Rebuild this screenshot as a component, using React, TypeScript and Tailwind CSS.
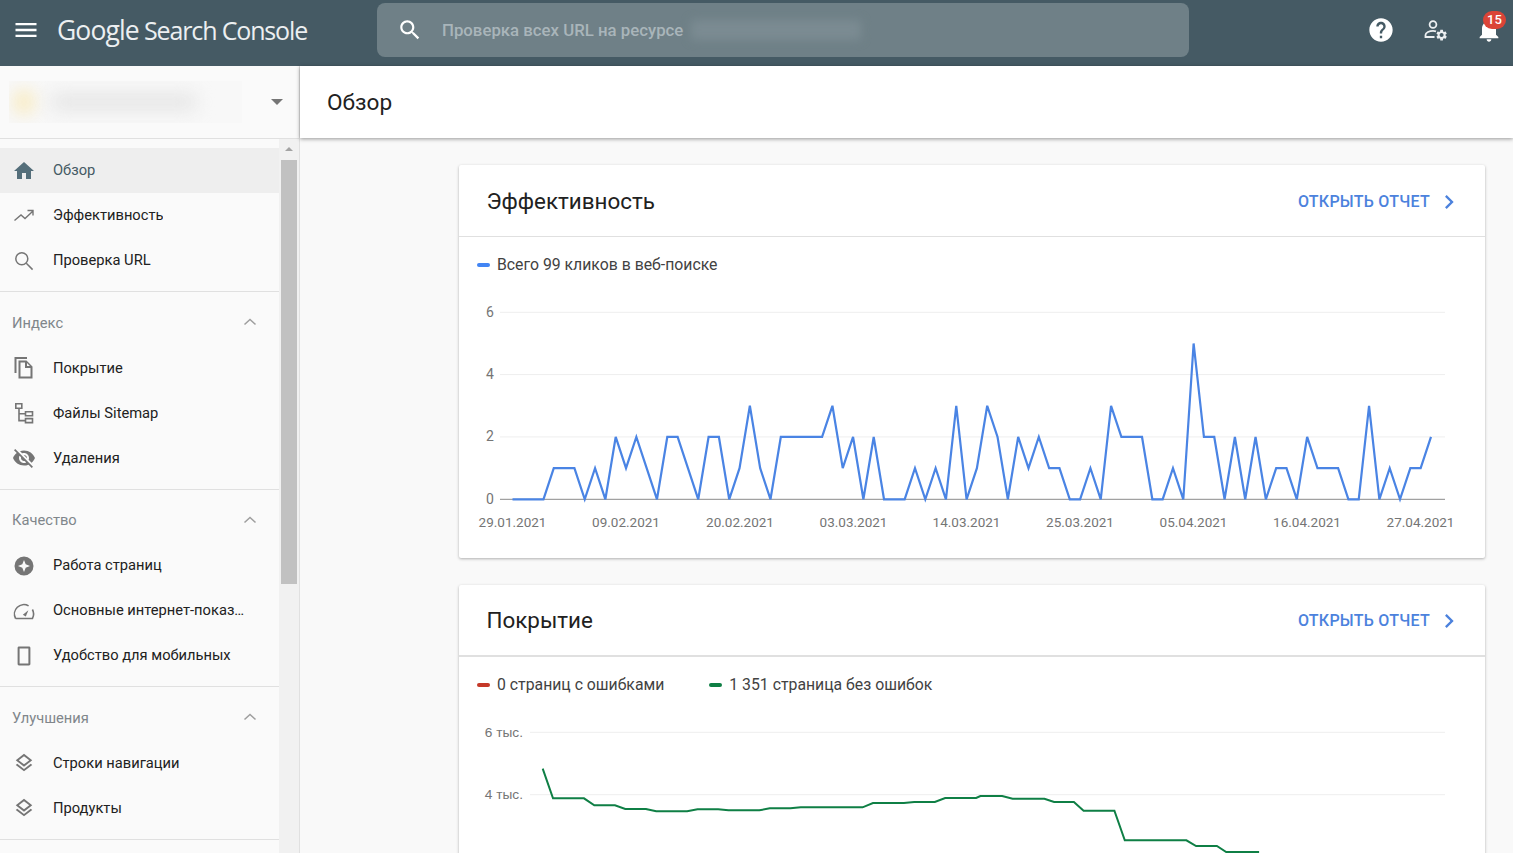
import type { ReactNode } from "react";

const clicks = [
  0, 0, 0, 0, 1, 1, 1, 0, 1, 0, 2, 1, 2, 1, 0, 2, 2, 1, 0, 2, 2, 0, 1, 3, 1, 0, 2, 2, 2, 2, 2, 3, 1, 2, 0, 2, 0, 0, 0, 1, 0, 1, 0, 3, 0, 1,
  3, 2, 0, 2, 1, 2, 1, 1, 0, 0, 1, 0, 3, 2, 2, 2, 0, 0, 1, 0, 5, 2, 2, 0, 2, 0, 2, 0, 1, 1, 0, 2, 1, 1, 1, 0, 0, 3, 0, 1, 0, 1, 1, 2,
];

const clickPoints = clicks.map((v, i) => `${512.5 + i * 10.32},${499.3 - v * 31.17}`).join(" ");

const coverageTop = [
  768.7, 798.3, 798.3, 798.3, 798.3, 805.3, 805.3, 805.3, 809, 809, 809, 811.3, 811.3, 811.3, 811.3, 809.3, 809.3, 809.3, 810.3, 810.3, 810.3,
  810.3, 808.3, 808.3, 808.3, 807.3, 807.3, 807.3, 807.3, 807.3, 807.3, 807.3, 803, 803, 803, 803, 802, 802, 802, 798, 798, 798, 798,
];

const coveragePoints =
  coverageTop.map((y, i) => `${542.7 + i * 10.32},${y}`).join(" ") +
  " 980.4,796 1002.2,796 1012.6,798.7 1044.4,798.7 1054.1,802 1073.9,802 1083.6,810.7 1114.4,810.7 1124.8,840.3 1186.4,840.3 1196.1,846 1216.9,846 1226.2,852 1259.1,852";

const dates = [
  ["29.01.2021", 512.5],
  ["09.02.2021", 626],
  ["20.02.2021", 740],
  ["03.03.2021", 853.5],
  ["14.03.2021", 966.5],
  ["25.03.2021", 1080],
  ["05.04.2021", 1193.5],
  ["16.04.2021", 1307],
  ["27.04.2021", 1420.5],
] as const;

function Icon({ children, className }: { children: ReactNode; className?: string }) {
  return (
    <svg viewBox="0 0 24 24" className={className ?? "h-6 w-6 shrink-0 fill-[#757575]"}>
      {children}
    </svg>
  );
}

const layers = (
  <Icon className="h-[22px] w-6 shrink-0 fill-[#757575]">
    <path d="M11.99 18.54l-7.37-5.73L3 14.07l9 7 9-7-1.63-1.27-7.38 5.74zM12 16l7.36-5.73L21 9l-9-7-9 7 1.63 1.27L12 16zm0-11.47L17.74 9 12 13.47 6.26 9 12 4.53z" />
  </Icon>
);

const groups = [
  {
    title: "Индекс",
    items: [
      {
        label: "Покрытие",
        icon: (
          <Icon>
            <path d="M15 1H2.5v16h2V3H15V1zm-.5 3.5l6 6v12h-14v-18h8zm-6 2v14h10V12H13V6.500H8.500zm6.500.6V10h2.900L15 7.100z" />
          </Icon>
        ),
      },
      {
        label: "Файлы Sitemap",
        icon: (
          <Icon className="h-6 w-6 shrink-0 fill-none stroke-[#757575] stroke-[1.6]">
            <path d="M3.8 2.8h6v4.4h-6zM13.5 10.8h7v4h-7zM13.5 17.6h7v4h-7zM7 7.2v12.4h6.5M7 12.8h6.5" />
          </Icon>
        ),
      },
      {
        label: "Удаления",
        icon: (
          <Icon>
            <path d="M12 7c2.76 0 5 2.24 5 5 0 .65-.13 1.26-.36 1.83l2.92 2.92c1.51-1.26 2.7-2.89 3.43-4.75-1.73-4.39-6-7.5-11-7.5-1.4 0-2.74.25-3.98.7l2.16 2.16C10.74 7.13 11.35 7 12 7zM2 4.27l2.28 2.28.46.46C3.08 8.3 1.78 10.02 1 12c1.73 4.39 6 7.5 11 7.5 1.55 0 3.03-.3 4.38-.84l.42.42L19.73 22 21 20.73 3.27 3 2 4.27zM7.53 9.8l1.55 1.55c-.05.21-.08.43-.08.65 0 1.66 1.34 3 3 3 .22 0 .44-.03.65-.08l1.55 1.55c-.67.33-1.41.53-2.2.53-2.76 0-5-2.24-5-5 0-.79.2-1.53.53-2.2zm4.31-.78l3.15 3.15.02-.16c0-1.66-1.34-3-3-3l-.17.01z" />
          </Icon>
        ),
      },
    ],
  },
  {
    title: "Качество",
    items: [
      {
        label: "Работа страниц",
        icon: (
          <Icon>
            <path
              fillRule="evenodd"
              d="M12 2.5a9.5 9.5 0 1 0 0 19 9.5 9.5 0 0 0 0-19zm0 3.5l1.7 4.3L18 12l-4.3 1.7L12 18l-1.7-4.3L6 12l4.3-1.7L12 6z"
            />
          </Icon>
        ),
      },
      {
        label: "Основные интернет-показатели",
        icon: (
          <Icon className="h-6 w-6 shrink-0 fill-none stroke-[#757575] stroke-[1.6]">
            <path d="M3.6 19.5a9.4 9.4 0 0 1 13-12.6M20.4 10.5a9.4 9.4 0 0 1 0 9H3.6" />
            <path d="M10.8 15.8l5.6-4.6-2.6 6.4z" className="fill-[#757575] stroke-none" />
          </Icon>
        ),
      },
      {
        label: "Удобство для мобильных",
        icon: (
          <Icon>
            <path d="M17 2.5H7c-.8 0-1.4.6-1.4 1.4v16.2c0 .8.6 1.4 1.4 1.4h10c.8 0 1.4-.6 1.4-1.4V3.9c0-.8-.6-1.4-1.4-1.4zm-.6 17H7.600v-15h8.800v15z" />
          </Icon>
        ),
      },
    ],
  },
  {
    title: "Улучшения",
    items: [
      { label: "Строки навигации", icon: layers },
      { label: "Продукты", icon: layers },
    ],
  },
];

function NavRow({ icon, label, active }: { icon: ReactNode; label: string; active?: boolean }) {
  return (
    <div className={`flex h-[45px] items-center gap-[17px] pr-8 pl-3 text-[14.7px] ${active ? "bg-[#eeeeee] text-[#455a64]" : "text-[#212121]"}`}>
      {icon}
      <span className="truncate">{label}</span>
    </div>
  );
}

function ReportLink({ className }: { className: string }) {
  return (
    <div className={`flex items-center gap-[5px] text-[16px] font-medium tracking-[0.25px] text-[#4c82dd] ${className}`}>
      ОТКРЫТЬ ОТЧЕТ
      <Icon className="-mr-[2px] h-7 w-7 fill-[#4c82dd]">
        <path d="M10 6L8.59 7.41 13.17 12l-4.58 4.59L10 18l6-6z" />
      </Icon>
    </div>
  );
}

function Legend({ color, label }: { color: string; label: string }) {
  return (
    <div className="flex items-center gap-[7px] text-[15.8px] text-[#424242]">
      <span className={`h-1 w-[13px] rounded-full ${color}`} />
      {label}
    </div>
  );
}

export default function App() {
  return (
    <div className="flex h-screen flex-col overflow-hidden bg-[#f9f9f9] font-['Roboto',sans-serif]">
      {/* Top bar */}
      <header className="flex h-[66px] shrink-0 items-start bg-[#455a64] text-white">
        <div className="mt-[16px] ml-[12px] w-[28px]">
          <Icon className="h-[28px] w-[28px] fill-white">
            <path d="M3 18h18v-2H3v2zm0-5h18v-2H3v2zm0-7v2h18V6H3z" />
          </Icon>
        </div>
        <div className="mt-[13px] ml-[17px] w-[320px] font-['Open_Sans',sans-serif] text-[25px] leading-[34px] tracking-[-1.15px] whitespace-nowrap text-[#eceff1]">
          <span className="text-[26.5px] tracking-[-0.9px]">Google</span> Search Console
        </div>
        <div className="relative mt-[3px] flex h-[54px] w-[812px] items-center overflow-hidden rounded-lg bg-[#6f8087] pl-5">
          <Icon className="h-[26px] w-[26px] fill-white">
            <path d="M15.5 14h-.79l-.28-.27C15.41 12.59 16 11.11 16 9.5 16 5.91 13.09 3 9.5 3S3 5.91 3 9.5 5.91 16 9.5 16c1.61 0 3.09-.59 4.23-1.57l.27.28v.79l5 4.99L20.49 19l-4.99-5zm-6 0C7.01 14 5 11.99 5 9.5S7.01 5 9.5 5 14 7.01 14 9.5 11.99 14 9.5 14z" />
          </Icon>
          <span className="ml-[19px] pt-px text-[16.8px] font-medium text-[#a9b5ba]">Проверка всех URL на ресурсе</span>
          <span className="ml-2 h-5 w-[170px] rounded bg-[#7b8b92] blur-[5px]" />
        </div>
        <div className="mt-[16px] ml-auto flex items-center gap-[27px] pr-[10px]">
          <Icon className="h-[28px] w-[28px] fill-white">
            <path d="M12 2C6.48 2 2 6.48 2 12s4.48 10 10 10 10-4.48 10-10S17.52 2 12 2zm1 17h-2v-2h2v2zm2.07-7.75l-.9.92C13.45 12.9 13 13.5 13 15h-2v-.5c0-1.1.45-2.1 1.17-2.83l1.24-1.26c.37-.36.59-.86.59-1.41 0-1.1-.9-2-2-2s-2 .9-2 2H8c0-2.21 1.79-4 4-4s4 1.79 4 4c0 .88-.36 1.68-.93 2.25z" />
          </Icon>
          <svg viewBox="0 0 26 26" className="h-[26px] w-[26px]">
            <circle cx="11" cy="7.5" r="3.4" fill="none" stroke="#eceff1" strokeWidth="1.8" />
            <path d="M14 14.3c-1-.3-2-.4-3-.4-3.5 0-7.5 1.7-7.5 4V20h9" fill="none" stroke="#eceff1" strokeWidth="1.8" />
            <g transform="translate(13 11.5) scale(0.55)" fill="#eceff1">
              <path d="M19.14 12.94c.04-.3.06-.61.06-.94 0-.32-.02-.64-.07-.94l2.03-1.58c.18-.14.23-.41.12-.61l-1.92-3.32c-.12-.22-.37-.29-.59-.22l-2.39.96c-.5-.38-1.03-.7-1.62-.94l-.36-2.54c-.04-.24-.24-.41-.48-.41h-3.84c-.24 0-.43.17-.47.41l-.36 2.54c-.59.24-1.13.57-1.62.94l-2.39-.96c-.22-.08-.47 0-.59.22L2.74 8.87c-.12.21-.08.47.12.61l2.03 1.58c-.05.3-.09.63-.09.94s.02.64.07.94l-2.03 1.58c-.18.14-.23.41-.12.61l1.92 3.32c.12.22.37.29.59.22l2.39-.96c.5.38 1.03.7 1.62.94l.36 2.54c.05.24.24.41.48.41h3.84c.24 0 .44-.17.47-.41l.36-2.54c.59-.24 1.13-.56 1.62-.94l2.39.96c.22.08.47 0 .59-.22l1.92-3.32c.12-.22.07-.47-.12-.61l-2.01-1.58zM12 15.6c-1.98 0-3.6-1.62-3.6-3.6s1.62-3.6 3.6-3.6 3.6 1.62 3.6 3.6-1.62 3.6-3.6 3.6z" />
            </g>
          </svg>
          <div className="relative">
            <Icon className="h-[28px] w-[28px] fill-white">
              <path d="M12 22c1.1 0 2-.9 2-2h-4c0 1.1.89 2 2 2zm6-6v-5c0-3.07-1.64-5.64-4.5-6.32V4c0-.83-.67-1.5-1.5-1.5s-1.5.67-1.5 1.5v.68C7.63 5.36 6 7.92 6 11v5l-2 2v1h16v-1l-2-2z" />
            </Icon>
            <span className="absolute -top-[5px] -right-[3px] flex h-[18px] w-[23px] items-center justify-center rounded-full bg-[#db4437] text-[13px] font-medium text-white">
              15
            </span>
          </div>
        </div>
      </header>

      <div className="flex min-h-0 flex-1">
        {/* Sidebar */}
        <aside className="flex w-[300px] shrink-0 flex-col border-r border-[#e0e0e0] bg-[#fafafa]">
          <div className="flex h-[73px] shrink-0 items-center border-b border-[#e0e0e0] pl-[9px]">
            <div className="relative flex h-[42px] w-[233px] items-center overflow-hidden bg-[#f8f8f8]">
              <span className="ml-[4px] h-[26px] w-[22px] rounded-full bg-[#f8ecc6] blur-[8px]" />
              <span className="ml-4 h-[16px] w-[145px] rounded bg-[#e4e4e4] blur-[9px]" />
            </div>
            <span className="ml-[29px] h-0 w-0 border-x-[6px] border-t-[6px] border-x-transparent border-t-[#757575]" />
          </div>
          <div className="flex min-h-0 flex-1">
            <nav className="w-[279px] shrink-0">
              <div className="border-b border-[#e0e0e0] pt-[9px] pb-2">
                <NavRow
                  active
                  label="Обзор"
                  icon={
                    <Icon className="h-6 w-6 shrink-0 fill-[#546e7a]">
                      <path d="M10 20v-6h4v6h5v-8h3L12 3 2 12h3v8z" />
                    </Icon>
                  }
                />
                <NavRow
                  label="Эффективность"
                  icon={
                    <Icon className="h-6 w-6 shrink-0 fill-none stroke-[#757575] stroke-[1.4]">
                      <path d="M2.5 16.5L9 11l4 3.5 7.5-7M15.5 6.5H21v5" />
                    </Icon>
                  }
                />
                <NavRow
                  label="Проверка URL"
                  icon={
                    <Icon className="h-6 w-6 shrink-0 fill-none stroke-[#757575] stroke-[1.5]">
                      <circle cx="9.8" cy="9.8" r="6" />
                      <path d="M14.3 14.3l6.3 6.3" />
                    </Icon>
                  }
                />
              </div>
              {groups.map((g) => (
                <div key={g.title} className="border-b border-[#e0e0e0] pt-[8.5px] pb-2">
                  <div className="flex h-[45px] items-center justify-between pr-[17px] pl-3 text-[14.7px] text-[#80868b]">
                    {g.title}
                    <Icon className="-mt-[2px] h-6 w-6 fill-none stroke-[#9e9e9e] stroke-[1.5]">
                      <path d="M6.5 14.5L12 9.5l5.5 5" />
                    </Icon>
                  </div>
                  {g.items.map((it) => (
                    <NavRow key={it.label} icon={it.icon} label={it.label} />
                  ))}
                </div>
              ))}
            </nav>
            {/* Scrollbar */}
            <div className="flex flex-1 flex-col items-center bg-[#f1f1f1] px-[2px]">
              <span className="mt-[8px] h-0 w-0 border-x-[4px] border-b-[4px] border-x-transparent border-b-[#a3a3a3]" />
              <span className="mt-[9px] h-[424px] w-full bg-[#c1c1c1]" />
            </div>
          </div>
        </aside>

        {/* Main */}
        <main className="flex min-w-0 flex-1 flex-col">
          <div className="relative z-10 flex h-[72px] shrink-0 items-center bg-white pt-[2px] pl-[27px] text-[22.6px] text-[#212121] shadow-[0_1px_4px_rgba(0,0,0,0.4)]">
            Обзор
          </div>
          <div className="flex flex-col gap-[27px] pt-[27px] pr-[28px] pl-[159px]">
            <section className="h-[393px] shrink-0 rounded-[2px] bg-white shadow-[0_1px_3px_rgba(0,0,0,0.3)]">
              <div className="flex h-[72px] items-center justify-between border-b border-[#e0e0e0] pr-[24px] pl-[27.5px]">
                <h2 className="pt-[3px] text-[22.4px] text-[#212121]">Эффективность</h2>
                <ReportLink className="mt-[2px]" />
              </div>
              <div className="flex h-[56px] items-center pl-[18px]">
                <Legend color="bg-[#4285f4]" label="Всего 99 кликов в веб-поиске" />
              </div>
              <svg viewBox="459 293 1026 244" className="block h-[244px] w-[1026px]" fontFamily="Roboto, sans-serif" fontSize="14" fill="#757575">
                {[6, 4, 2].map((v, i) => (
                  <g key={v}>
                    <line x1="500" x2="1445" y1={312.3 + i * 62.3} y2={312.3 + i * 62.3} stroke="#eeeeee" />
                    <text x="490" y={316.8 + i * 62.3} textAnchor="middle">
                      {v}
                    </text>
                  </g>
                ))}
                <line x1="500" x2="1445" y1="499.3" y2="499.3" stroke="#8a8a8a" />
                <text x="490" y="504.3" textAnchor="middle">
                  0
                </text>
                <polyline points={clickPoints} fill="none" stroke="#4a84e4" strokeWidth="2.2" strokeLinejoin="miter" />
                {dates.map(([d, x]) => (
                  <text key={d} x={x} y="527" textAnchor="middle" fontSize="13.5">
                    {d}
                  </text>
                ))}
              </svg>
            </section>
            <section className="h-[400px] shrink-0 rounded-[2px] bg-white shadow-[0_1px_3px_rgba(0,0,0,0.3)]">
              <div className="flex h-[72px] items-center justify-between border-b-2 border-[#e0e0e0] pr-[24px] pl-[27.5px]">
                <h2 className="pt-[1px] text-[22.4px] text-[#212121]">Покрытие</h2>
                <ReportLink className="mt-[1px]" />
              </div>
              <div className="flex h-[56px] items-center gap-[45px] pl-[18px]">
                <Legend color="bg-[#c53929]" label="0 страниц с ошибками" />
                <Legend color="bg-[#0f7f45]" label="1 351 страница без ошибок" />
              </div>
              <svg viewBox="459 713 1026 200" className="block h-[200px] w-[1026px]" fontFamily="Liberation Sans, sans-serif" fontSize="13.7" fill="#757575">
                {[
                  ["6 тыс.", 732.3],
                  ["4 тыс.", 794.7],
                ].map(([t, y]) => (
                  <g key={t}>
                    <line x1="530" x2="1445" y1={y} y2={y} stroke="#eeeeee" />
                    <text x="523" y={Number(y) + 4.5} textAnchor="end">
                      {t}
                    </text>
                  </g>
                ))}
                <polyline points={coveragePoints} fill="none" stroke="#0f7f45" strokeWidth="2" />
              </svg>
            </section>
          </div>
        </main>
      </div>
    </div>
  );
}
